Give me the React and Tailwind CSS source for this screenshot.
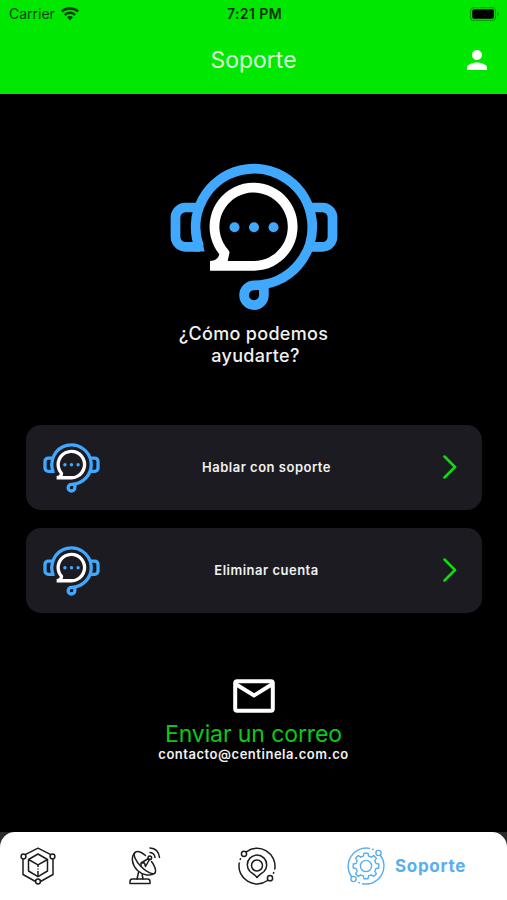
function WifiIcon() {
  return (
    <svg viewBox="0 0 18 14" className="h-[14px] w-[18px]" fill="#063d06">
      <path d="M9 0C5.5 0 2.4 1.4 0 3.6L1.8 5.6C3.7 3.8 6.2 2.8 9 2.8s5.3 1 7.2 2.8L18 3.6C15.6 1.4 12.5 0 9 0z" />
      <path d="M9 4.5c-2.3 0-4.4.9-6 2.4l1.8 2C5.9 7.8 7.4 7.1 9 7.1s3.1.7 4.2 1.8l1.8-2c-1.6-1.5-3.7-2.4-6-2.4z" />
      <path d="M9 8.9c-1.2 0-2.2.5-3 1.2L9 13.5l3-3.4c-.8-.7-1.8-1.2-3-1.2z" />
    </svg>
  );
}

function BatteryIcon() {
  return (
    <svg viewBox="0 0 30 14" className="h-[14px] w-[30px]">
      <rect x="0.6" y="0.6" width="24.8" height="12.8" rx="3.5" fill="none" stroke="#07a007" strokeWidth="1.2" />
      <rect x="2.2" y="2.2" width="21.8" height="9.6" rx="2" fill="#000" />
      <path d="M27 4.8c1.3.5 2 1.2 2 2.2s-.7 1.7-2 2.2z" fill="#07a007" />
    </svg>
  );
}

function HeadsetIcon({ className }) {
  return (
    <svg viewBox="0 0 168 148" className={className} fill="none">
      <g stroke="#40a9ff" strokeWidth="9.7">
        <path d="M29.2 84A58.3 58.3 0 1 1 84 122.3A9.9 9.9 0 1 0 93.9 132.3V121.5" />
        <path d="M31 44.5H15.5A10 10 0 0 0 5.5 54.5V73.8A10 10 0 0 0 15.5 83.8H30" />
        <path d="M137 44.5H152.5A10 10 0 0 1 162.5 54.5V73.8A10 10 0 0 1 152.5 83.8H137" />
      </g>
      <path d="M24 79H32.5L34.5 88.6H24Z" fill="#40a9ff" />
      <path
        fill="#fff"
        fillRule="evenodd"
        d="M40 107.7V98C44.5 98 48.5 95.5 49.3 91.3A44 44 0 1 1 84 107.7ZM57.7 98H84A34.2 34.2 0 1 0 58 86.5L59.6 89Z"
      />
      <g fill="#40a9ff">
        <circle cx="64.5" cy="64.2" r="5" />
        <circle cx="84" cy="64.2" r="5" />
        <circle cx="103.5" cy="64.2" r="5" />
      </g>
    </svg>
  );
}

function CubeIcon() {
  return (
    <svg viewBox="0 0 36 38" className="h-[38px] w-[36px]" fill="none" stroke="#1c1c1c" strokeWidth="1.5" strokeLinejoin="round">
      <path d="M5.2 7.7L18 1.2L30.8 7.7M33 12V27.5L20.5 34.5M15.5 34.5L3 27.5V12" />
      <path d="M18 7L27.5 12.5V24L18 29.7L8.5 24V12.5ZM8.5 12.5L18 17.8L27.5 12.5" />
      <path d="M18 18V20M18 21.5V22.5M18 24V29" />
      <circle cx="3.5" cy="9.5" r="2.4" fill="#fff" />
      <circle cx="32.5" cy="9.5" r="2.4" fill="#fff" />
      <circle cx="18" cy="34.5" r="2.4" fill="#fff" />
    </svg>
  );
}

function DishIcon() {
  return (
    <svg viewBox="0 0 32 38" className="h-[38px] w-[32px]" fill="none" stroke="#1c1c1c" strokeWidth="1.5" strokeLinecap="round" strokeLinejoin="round">
      <path d="M1 36.5V34.5Q1 32 3.5 32H18.5Q21 32 21 34.5V36.5Z" />
      <path d="M8 32L9.5 25.5M14 32L13.2 27.5" />
      <path d="M6 5.5C1.5 10 3 18 8.5 23.5C14 28.5 21.5 29.5 26 26" />
      <path d="M16.5 8.5C12 4.8 8 3.7 6 5.5C3.8 7.8 6.5 14 12 19.5C17.5 25 24 28.3 26 26C27.6 24 26 19 22.5 14.5" />
      <path d="M12 16L19.5 11.5M16.5 19.5L20.5 12.5M12 16H15.5L16.5 19.5M12 16V19" />
      <circle cx="20.8" cy="10.8" r="1.8" />
      <path d="M21 5.5Q25.5 6 26 10.5M21 1Q29.5 1.5 30.5 10.5" />
    </svg>
  );
}

function PinIcon() {
  return (
    <svg viewBox="0 0 38 38" className="h-[38px] w-[38px]" fill="none" stroke="#1c1c1c" strokeWidth="1.5" strokeLinecap="round">
      <path d="M8.3 4.8A18 18 0 0 1 36.8 22M29.5 33.5A18 18 0 0 1 1.2 16" />
      <path d="M35.7 25.5L35.4 26.2M2.2 12.5L2.5 11.8" />
      <circle cx="6" cy="6.8" r="2.6" />
      <circle cx="32" cy="31.2" r="2.6" />
      <path d="M19 30.5C17.5 28.2 14.5 26.5 12 24.5A9.7 9.7 0 1 1 26 24.5C23.5 26.5 20.5 28.2 19 30.5Z" strokeLinejoin="round" />
      <circle cx="19" cy="18.5" r="5.5" />
    </svg>
  );
}

function GearIcon() {
  return (
    <svg viewBox="0 0 38 38" className="h-[38px] w-[38px]" fill="none" stroke="#58aeef" strokeWidth="1.4" strokeLinecap="round" strokeLinejoin="round">
      <path d="M33.2 8A18 18 0 0 1 15.5 36.7M4.8 30A18 18 0 0 1 22.5 1.4" />
      <path d="M25.5 2.2L26.2 2.5M12.5 35.8L11.8 35.5" />
      <circle cx="31.5" cy="6" r="2.6" />
      <circle cx="6.5" cy="32" r="2.6" />
      <circle cx="19" cy="19" r="5.6" />
      <path d="M16.5 9L17 6.2H21L21.5 9L24.3 10.2L26.7 8.6L29.4 11.3L27.8 13.7L29 16.5L31.8 17V21L29 21.5L27.8 24.3L29.4 26.7L26.7 29.4L24.3 27.8L21.5 29L21 31.8H17L16.5 29L13.7 27.8L11.3 29.4L8.6 26.7L10.2 24.3L9 21.5L6.2 21V17L9 16.5L10.2 13.7L8.6 11.3L11.3 8.6L13.7 10.2Z" />
    </svg>
  );
}

function OptionCard({ label }) {
  return (
    <button type="button" className="grid h-[85px] w-full grid-cols-[105px_1fr_79px] items-center rounded-[15px] bg-[#1b1b21]">
      <HeadsetIcon className="ml-[17.5px] h-[50px] w-[57px]" />
      <span className="text-[13px] font-semibold tracking-[0.5px] text-[#f1f1f1]">{label}</span>
      <svg viewBox="0 0 14 24" className="mb-px ml-auto mr-[25px] h-[24px] w-[14px]" fill="none" stroke="#0be00b" strokeWidth="2.5" strokeLinecap="round" strokeLinejoin="round">
        <path d="M1.5 1.5L12 12L1.5 22.5" />
      </svg>
    </button>
  );
}

export default function App() {
  return (
    <div className="flex h-[900px] w-[507px] flex-col overflow-hidden bg-black font-['Inter','Liberation_Sans',sans-serif]">
      <header className="flex h-[94px] flex-col bg-[#00e800]">
        <div className="grid h-[27px] grid-cols-3 items-center pl-[9px] pr-[7px] text-[14px] text-[#063d06]">
          <div className="flex items-center gap-[6px]">
            <span>Carrier</span>
            <WifiIcon />
          </div>
          <span className="text-center font-semibold tracking-[0.4px] text-[#043004]">7:21 PM</span>
          <div className="flex justify-end">
            <BatteryIcon />
          </div>
        </div>
        <div className="grid h-[67px] grid-cols-[40px_1fr_40px] items-center pb-px">
          <h1 className="col-start-2 text-center text-[23px] leading-[28px] text-[#dcffdc]">Soporte</h1>
          <svg viewBox="4 4 16 16" className="h-[20px] w-[20px]" fill="#fff">
            <path d="M12 12c2.21 0 4-1.79 4-4s-1.79-4-4-4-4 1.79-4 4 1.79 4 4 4zm0 2c-2.67 0-8 1.34-8 4v2h16v-2c0-2.66-5.33-4-8-4z" />
          </svg>
        </div>
      </header>

      <main className="flex flex-1 flex-col items-center px-[25.5px]">
        <HeadsetIcon className="mt-[69px] h-[148px] w-[168px]" />
        <h2 className="mt-[12px] w-[180px] text-center text-[18px] font-medium leading-[22px] tracking-[0.3px] text-[#f1f1f1]">
          ¿Cómo podemos <span className="pl-[4px]">ayudarte?</span>
        </h2>

        <div className="mt-[58px] flex w-full flex-col gap-[18px]">
          <OptionCard label="Hablar con soporte" />
          <OptionCard label="Eliminar cuenta" />
        </div>

        <div className="mt-[66px] flex flex-col items-center">
          <svg viewBox="0 0 42 34" className="h-[34px] w-[42px]" fill="none" stroke="#fff" strokeWidth="4">
            <rect x="2.2" y="2.2" width="37.6" height="29.6" rx="2" />
            <path d="M2.5 5L21 16.5L39.5 5" />
          </svg>
          <span className="mt-[9px] text-[23px] leading-[24px] tracking-[-0.1px] text-[#0bc91a]">Enviar un correo</span>
          <span className="mt-px text-[13px] font-semibold leading-[14px] tracking-[0.53px] text-[#f1f1f1]">contacto@centinela.com.co</span>
        </div>
      </main>

      <div className="bg-[#2b2b2d]">
        <nav className="flex h-[68px] items-center rounded-t-[15px] bg-white">
          <div className="flex w-[129px] pl-[20px]"><CubeIcon /></div>
          <div className="flex w-[109px]"><DishIcon /></div>
          <div className="flex w-[109px]"><PinIcon /></div>
          <div className="flex items-center gap-[10px]">
            <GearIcon />
            <span className="pt-px text-[17px] font-bold tracking-[0.7px] text-[#58aeef]">Soporte</span>
          </div>
        </nav>
      </div>
    </div>
  );
}
